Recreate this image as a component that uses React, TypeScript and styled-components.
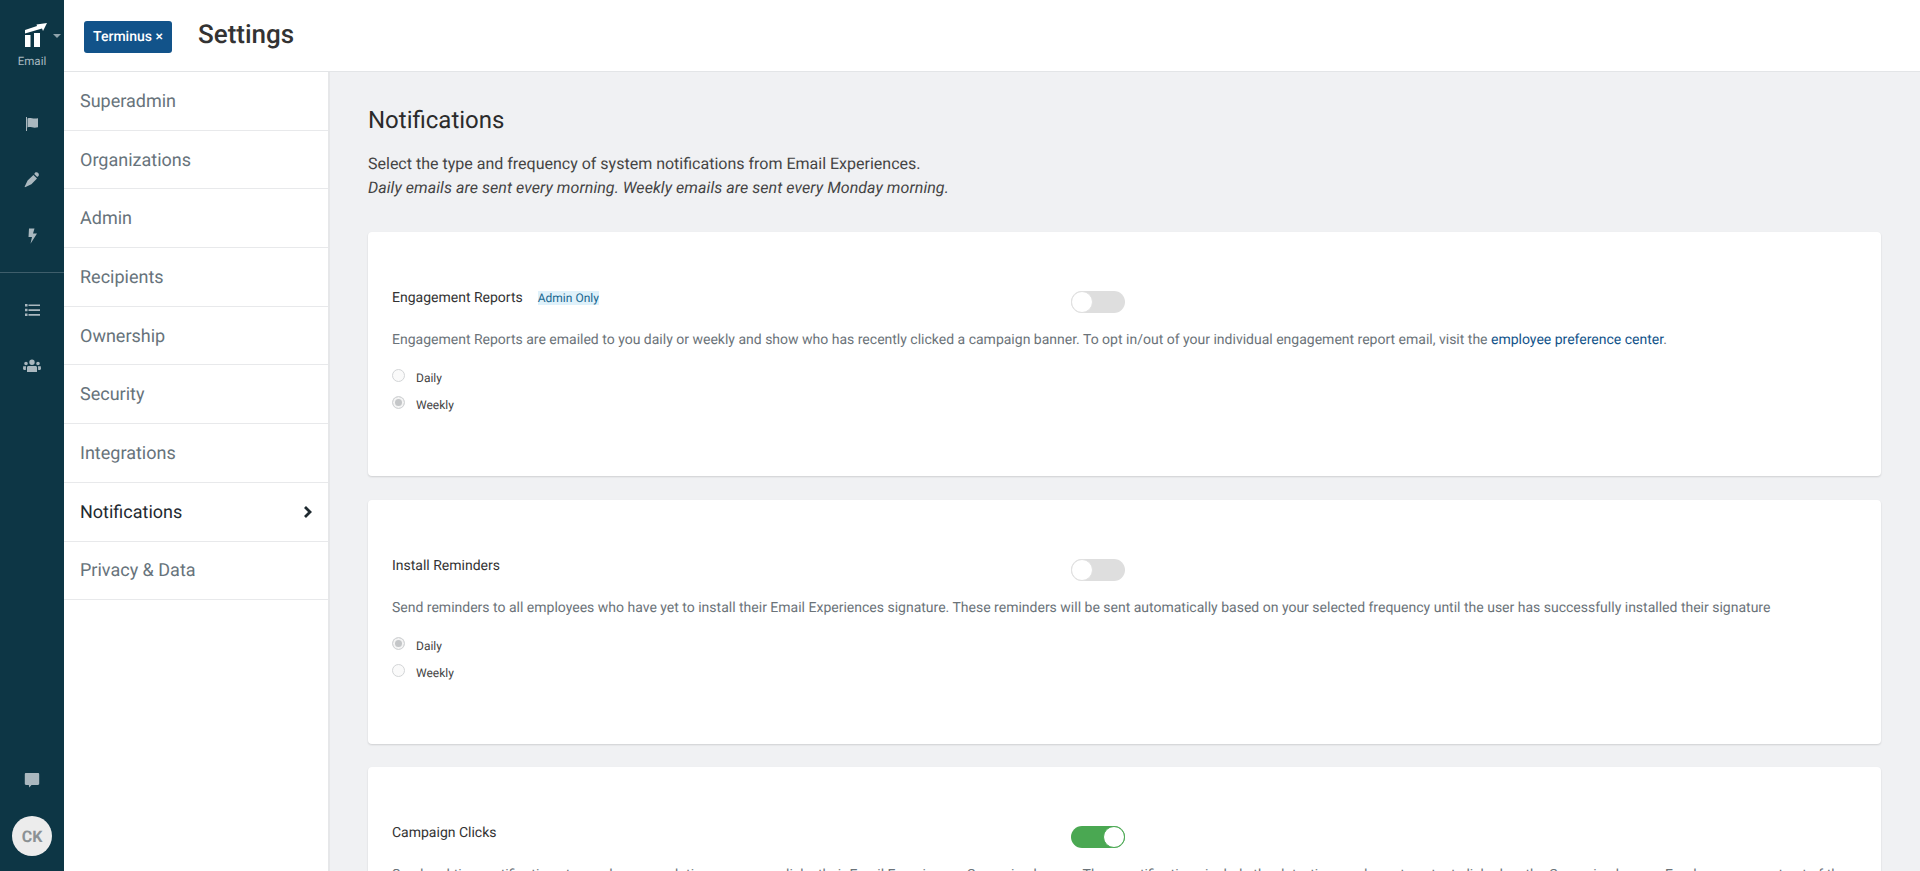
import React from 'react';
import styled, { createGlobalStyle } from 'styled-components';

const Global = createGlobalStyle`
  html, body { margin: 0; padding: 0; height: 100%; overflow: hidden; }
  body { font-family: Roboto, "Liberation Sans", sans-serif; color: #333; background: #f0f1f3; text-rendering: geometricPrecision; }
  #root { height: 100%; }
  * { box-sizing: border-box; }
`;

const Shell = styled.div`
  display: flex;
  height: 871px;
  overflow: hidden;
`;

const Rail = styled.aside`
  width: 64px;
  flex: none;
  display: flex;
  flex-direction: column;
  align-items: center;
  background: #0d3645;
`;

const Brand = styled.div`
  position: relative;
  width: 64px;
  height: 71px;
  display: flex;
  flex-direction: column;
  align-items: center;
  padding-top: 22px;
`;

const BrandLogo = styled.svg`
  align-self: flex-start;
  margin-left: 24px;
  width: 24px;
  height: 25px;
  fill: #fff;
`;

const BrandLabel = styled.span`
  font-size: 11.500px;
  line-height: 13px;
  margin-top: 8px;
  color: #a9bac1;
`;

const Caret = styled.span`
  position: absolute;
  top: 34px;
  left: 53px;
  border-left: 4px solid transparent;
  border-right: 4px solid transparent;
  border-top: 4px solid #8fa3ab;
`;

const RailGroup = styled.div<{ $top: number }>`
  display: flex;
  flex-direction: column;
  align-items: center;
  gap: 40px;
  padding-top: ${p => p.$top}px;
  width: 100%;
`;

const RailDivider = styled.div`
  width: 64px;
  height: 1px;
  margin-top: 28px;
  background: #3e5e6b;
`;

const RailIcon = styled.svg<{ $wide?: boolean }>`
  display: block;
  width: ${p => (p.$wide ? 18 : 16)}px;
  height: 16px;
  fill: #aab8bf;
`;

const RailSpacer = styled.div`
  flex: 1;
`;

const Avatar = styled.div`
  width: 40px;
  height: 40px;
  margin: 28px 0 15px;
  border-radius: 50%;
  display: flex;
  align-items: center;
  justify-content: center;
  background: #ececec;
  color: #8b9194;
  font-size: 16px;
  font-weight: 700;
`;

const Main = styled.div`
  flex: 1;
  min-width: 0;
  display: flex;
  flex-direction: column;
`;

const Header = styled.header`
  height: 72px;
  flex: none;
  display: flex;
  align-items: center;
  padding-left: 20px;
  padding-bottom: 2px;
  background: #fff;
  border-bottom: 1px solid #e3e5e7;
`;

const Pill = styled.span`
  display: flex;
  align-items: center;
  justify-content: center;
  width: 88px;
  height: 32px;
  margin-top: 4px;
  border-radius: 3px;
  background: #12538a;
  color: #fff;
  font-size: 14px;
  font-weight: 500;
`;

const Title = styled.h1`
  margin: 0 0 0 26px;
  font-size: 26px;
  font-weight: 500;
  color: #333;
`;

const Body = styled.div`
  flex: 1;
  min-height: 0;
  display: flex;
`;

const Nav = styled.nav`
  width: 266px;
  flex: none;
  background: #fff;
  border-right: 2px solid #e6e7e9;
`;

const NavItem = styled.div<{ $active?: boolean }>`
  height: 58.700px;
  display: flex;
  align-items: center;
  justify-content: space-between;
  padding: 1px 15px 0 16px;
  border-bottom: 1px solid #e8e9eb;
  font-size: 18px;
  color: ${p => (p.$active ? '#1f2a30' : '#67737b')};
`;

const Content = styled.main`
  flex: 1;
  min-width: 0;
  padding: 32px 39px 0 38px;
  background: #f0f1f3;
`;

const Heading = styled.h2`
  margin: 0;
  font-size: 24px;
  line-height: 32px;
  font-weight: 400;
  color: #2b2b2b;
`;

const Intro = styled.p<{ $italic?: boolean }>`
  margin: 0;
  font-size: 16px;
  line-height: 24px;
  color: #444;
  font-style: ${p => (p.$italic ? 'italic' : 'normal')};
  letter-spacing: ${p => (p.$italic ? '0.06px' : '0')};
`;

const IntroBlock = styled.div`
  margin: 16px 0 32px;
`;

const Card = styled.section`
  height: 244px;
  margin-bottom: 23.500px;
  padding: 56px 24px 0;
  background: #fff;
  border-radius: 4px;
  box-shadow: 0 1px 2px rgba(0, 0, 0, 0.14);
`;

const CardTop = styled.div`
  display: flex;
  align-items: flex-start;
  height: 42px;
`;

const LabelWrap = styled.div`
  width: 679px;
  display: flex;
  align-items: center;
  height: 20px;
`;

const Label = styled.span`
  font-size: 14px;
  color: #333;
`;

const Tag = styled.span`
  margin-left: 15px;
  padding: 0;
  font-size: 12px;
  line-height: 14px;
  background: #dff1fa;
  color: #17668f;
`;

const Toggle = styled.span<{ $on?: boolean }>`
  display: flex;
  justify-content: ${p => (p.$on ? 'flex-end' : 'flex-start')};
  width: 54px;
  height: 22px;
  margin-top: 3px;
  border-radius: 11px;
  background: ${p => (p.$on ? '#4aa852' : '#dedede')};
`;

const Knob = styled.span<{ $on?: boolean }>`
  width: 22px;
  height: 22px;
  border-radius: 50%;
  background: #fff;
  border: 1px solid ${p => (p.$on ? '#4aa852' : '#e0e0e0')};
`;

const Desc = styled.p`
  margin: 0;
  font-size: 14px;
  line-height: 20px;
  color: #6b7379;
  white-space: nowrap;
`;

const DescLink = styled.a`
  color: #12538a;
`;

const Radios = styled.div`
  margin-top: 19px;
  display: flex;
  flex-direction: column;
  gap: 7px;
`;

const RadioRow = styled.div`
  height: 20px;
  display: flex;
  align-items: flex-start;
`;

const RadioDot = styled.span<{ $on?: boolean }>`
  width: 13px;
  height: 13px;
  border-radius: 50%;
  border: 1px solid #d3d5d7;
  background: ${p => (p.$on ? '#c4c6c8' : '#fafafa')};
  box-shadow: ${p => (p.$on ? 'inset 0 0 0 2px #f4f4f4' : 'none')};
`;

const RadioText = styled.span`
  margin-left: 11px;
  margin-top: 2px;
  font-size: 12px;
  line-height: 14px;
  color: #444;
`;

const navItems = ['Superadmin', 'Organizations', 'Admin', 'Recipients', 'Ownership', 'Security', 'Integrations', 'Notifications', 'Privacy & Data'];

const Radio = ({ label, on }: { label: string; on?: boolean }) => (
  <RadioRow>
    <RadioDot $on={on} />
    <RadioText>{label}</RadioText>
  </RadioRow>
);

export default function App() {
  return (
    <Shell>
      <Global />
      <Rail>
        <Brand>
          <BrandLogo viewBox="0 0 24 25">
            <path d="M1 8 13 4 12.500 2.500 23 1 19 9 18 6.500 1 11.500z" />
            <rect x="1" y="13" width="5.500" height="12" />
            <rect x="10" y="11" width="6" height="14" />
          </BrandLogo>
          <BrandLabel>Email</BrandLabel>
          <Caret />
        </Brand>
        <RailGroup $top={45}>
          <RailIcon viewBox="0 0 16 16"><path d="M2 1h1v14H2zM3.500 2.500c3-1.500 5 .9 10.500-.3v9c-5 1.400-7.500-1-10.500.3z" /></RailIcon>
          <RailIcon viewBox="0 0 16 16"><path d="M11.200.6c.9-.6 2.200-.5 3 .3s.9 2 .3 3l-1.300 1.100-3-3zM9.400 3 13 6.600 7.400 12.200 1 15.200l-.4-.4 3-6.400z" /></RailIcon>
          <RailIcon viewBox="0 0 16 16"><path d="M5 .5h5.500L9 5.500h4L6.500 15.800 8 9H4.500z" /></RailIcon>
        </RailGroup>
        <RailDivider />
        <RailGroup $top={29}>
          <RailIcon viewBox="0 0 16 16"><path d="M1 2h2.500v2.500H1zM4.500 2.400H16v1.700H4.500zM1 6.800h2.500v2.500H1zM4.500 7.200H16v1.700H4.500zM1 11.600h2.500v2.500H1zM4.500 12H16v1.700H4.500z" /></RailIcon>
          <RailIcon $wide viewBox="0 0 18 16"><path d="M9 1.500a2.700 2.700 0 1 1 0 5.400 2.700 2.700 0 0 1 0-5.400zM3 3.700a1.800 1.800 0 1 1 0 3.600 1.800 1.800 0 0 1 0-3.600zM15 3.700a1.800 1.800 0 1 1 0 3.600 1.800 1.800 0 0 1 0-3.600zM5.500 8h7c.9 0 1.500.7 1.500 1.500V14H4V9.500C4 8.700 4.600 8 5.500 8zM.2 8.200H3L2.800 12H.9L0 11zM15 8.200h2.800l.2 2.800-.9 1h-1.900z" /></RailIcon>
        </RailGroup>
        <RailSpacer />
        <RailIcon viewBox="0 0 16 16"><path d="M2 1h12c.7 0 1.200.5 1.200 1.200v9.600c0 .7-.5 1.200-1.200 1.200H7.500L5.300 15.500 4.800 13H2c-.7 0-1.200-.5-1.200-1.200V2.200C.8 1.500 1.300 1 2 1z" /></RailIcon>
        <Avatar>CK</Avatar>
      </Rail>
      <Main>
        <Header>
          <Pill>Terminus ×</Pill>
          <Title>Settings</Title>
        </Header>
        <Body>
          <Nav>
            {navItems.map(item => (
              <NavItem key={item} $active={item === 'Notifications'}>
                {item}
                {item === 'Notifications' && (
                  <svg width="10" height="14" viewBox="0 0 10 14" fill="none" stroke="#1f2a30" strokeWidth="2.800">
                    <path d="M2 2l5 5-5 5" />
                  </svg>
                )}
              </NavItem>
            ))}
          </Nav>
          <Content>
            <Heading>Notifications</Heading>
            <IntroBlock>
              <Intro>Select the type and frequency of system notifications from Email Experiences.</Intro>
              <Intro $italic>Daily emails are sent every morning. Weekly emails are sent every Monday morning.</Intro>
            </IntroBlock>
            <Card>
              <CardTop>
                <LabelWrap>
                  <Label>Engagement Reports</Label>
                  <Tag>Admin Only</Tag>
                </LabelWrap>
                <Toggle><Knob /></Toggle>
              </CardTop>
              <Desc>
                Engagement Reports are emailed to you daily or weekly and show who has recently clicked a campaign banner. To opt in/out of your individual engagement report email, visit the <DescLink>employee preference center</DescLink>.
              </Desc>
              <Radios>
                <Radio label="Daily" />
                <Radio label="Weekly" on />
              </Radios>
            </Card>
            <Card>
              <CardTop>
                <LabelWrap><Label>Install Reminders</Label></LabelWrap>
                <Toggle><Knob /></Toggle>
              </CardTop>
              <Desc>
                Send reminders to all employees who have yet to install their Email Experiences signature. These reminders will be sent automatically based on your selected frequency until the user has successfully installed their signature
              </Desc>
              <Radios>
                <Radio label="Daily" on />
                <Radio label="Weekly" />
              </Radios>
            </Card>
            <Card>
              <CardTop>
                <LabelWrap><Label>Campaign Clicks</Label></LabelWrap>
                <Toggle $on><Knob $on /></Toggle>
              </CardTop>
              <Desc>
                Send real-time notifications to employees each time someone clicks their Email Experiences Campaign banner. These notifications include the date, time, and exact content clicked on the Campaign banner. Employees can opt out of the
              </Desc>
            </Card>
          </Content>
        </Body>
      </Main>
    </Shell>
  );
}
